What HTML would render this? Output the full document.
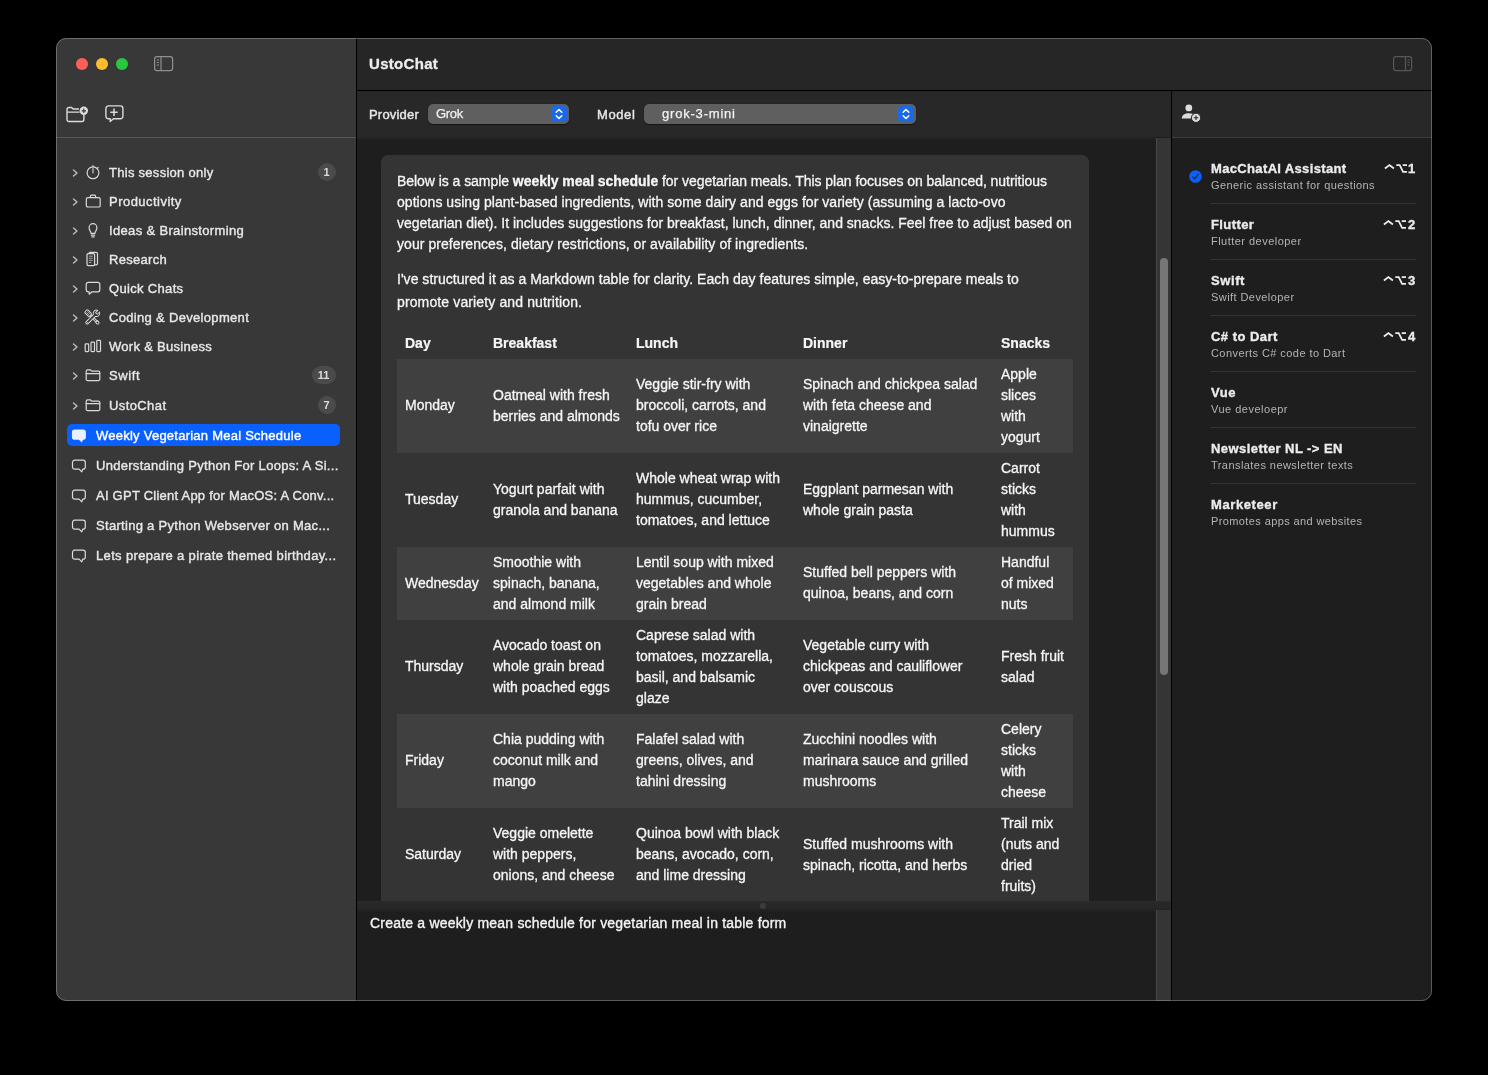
<!DOCTYPE html>
<html><head><meta charset="utf-8"><title>UstoChat</title>
<style>
html,body{margin:0;padding:0;background:#000;}
body{width:1488px;height:1075px;position:relative;overflow:hidden;font-family:"Liberation Sans",sans-serif;font-size:13px;color:#e4e4e4;}
div,span,b{font-family:"Liberation Sans",sans-serif;}
.abs{position:absolute;}
svg{position:absolute;overflow:visible;}
#win{position:absolute;left:56px;top:38px;width:1376px;height:963px;border-radius:10px;overflow:hidden;background:#1e1e1e;}
#winborder{position:absolute;left:56px;top:38px;width:1374px;height:961px;border-radius:10px;border:1px solid rgba(255,255,255,0.27);z-index:50;}
#sidebar{position:absolute;left:0;top:0;width:300px;height:963px;background:#383838;}
#sbline{position:absolute;left:0;top:99px;width:300px;height:1px;background:#585858;}
#vline1{position:absolute;left:300px;top:0;width:1px;height:963px;background:#000;}
#titlebar{position:absolute;left:301px;top:0;width:1075px;height:52px;background:#262626;}
#hline1{position:absolute;left:301px;top:52px;width:1075px;height:1px;background:#000;}
#provbar{position:absolute;left:301px;top:53px;width:814px;height:46px;background:#282828;}
#chat{position:absolute;left:301px;top:99px;width:799px;height:764px;background:#1e1e1e;overflow:hidden;}
#vline2{position:absolute;left:1115px;top:53px;width:1px;height:910px;background:#000;}
#rtool{position:absolute;left:1116px;top:53px;width:260px;height:46px;background:#282828;}
#rline{position:absolute;left:1116px;top:99px;width:260px;height:1px;background:#3c3c3c;}
#rpanel{position:absolute;left:1116px;top:100px;width:260px;height:863px;background:#1e1e1e;}
.tl{position:absolute;top:20px;width:12px;height:12px;border-radius:6px;}
.t{position:absolute;white-space:nowrap;will-change:transform;}
.sb{font-size:13px;color:#e8e8e8;line-height:16px;height:16px;-webkit-text-stroke:0.38px #e8e8e8;}
.badge{position:absolute;will-change:transform;height:18px;border-radius:9px;background:#4b4b4b;color:#dcdcdc;font-size:11px;font-weight:bold;line-height:18px;text-align:center;padding-right:1px;box-sizing:border-box;}
.msg{font-size:14px;line-height:21px;color:#f6f6f6;-webkit-text-stroke:0.3px #f6f6f6;}
.msg b{-webkit-text-stroke:0.3px #f6f6f6;}
.cell{position:absolute;will-change:transform;font-size:14px;line-height:21px;color:#f6f6f6;white-space:nowrap;-webkit-text-stroke:0.3px #f6f6f6;}
.rt{font-size:13px;font-weight:bold;color:#ececec;line-height:16px;height:16px;-webkit-text-stroke:0.35px #ececec;}
.rs{font-size:11px;color:#b4b4b4;line-height:14px;height:14px;}
.rdiv{position:absolute;left:95px;width:205px;height:1px;background:#343434;}
.track{position:absolute;left:1100px;width:14px;background:#353535;border-left:1px solid #474747;}
</style></head><body>
<div id="win">
<div id="sidebar">
<div class="tl" style="left:20px;background:#fe5f57;"></div>
<div class="tl" style="left:40px;background:#febc2e;"></div>
<div class="tl" style="left:60px;background:#28c840;"></div>
<div id="sbline"></div>
<svg style="left:98px;top:18px" width="20" height="16" viewBox="0 0 20 16"><rect x="0.6" y="0.6" width="18" height="14.1" rx="2.4" fill="none" stroke="#909090" stroke-width="1.2"/><path d="M7 0.6V14.7" stroke="#909090" stroke-width="1.2"/><path d="M2.8 4h2.2M2.8 6.5h2.2M2.8 9h2.2" stroke="#909090" stroke-width="1"/></svg>
<svg style="left:10px;top:66px" width="24" height="20" viewBox="0 0 24 20"><path d="M1 6.2 V15.6 a1.9 1.9 0 0 0 1.9 1.9 H16 a1.9 1.9 0 0 0 1.9 -1.9 V11" fill="none" stroke="#dcdcdc" stroke-width="1.4"/><path d="M1 6.4 V5.4 a1.9 1.9 0 0 1 1.9 -1.9 H5.6 l1.6 1.5 H13" fill="none" stroke="#dcdcdc" stroke-width="1.4"/><path d="M1 8.2 H13.6" stroke="#dcdcdc" stroke-width="1.3"/><circle cx="17.8" cy="6.8" r="4.2" fill="#dedede"/><path d="M17.8 4.6v4.4M15.6 6.8h4.4" stroke="#383838" stroke-width="1.15"/></svg>
<svg style="left:49px;top:66px" width="20" height="20" viewBox="0 0 20 20"><path d="M3.4 1.9 H15.4 a2.5 2.5 0 0 1 2.5 2.5 V12.2 a2.5 2.5 0 0 1 -2.5 2.5 H8.4 L5.2 17.6 V14.7 H3.4 a2.5 2.5 0 0 1 -2.5 -2.5 V4.4 a2.5 2.5 0 0 1 2.5 -2.5 Z" fill="none" stroke="#dcdcdc" stroke-width="1.4" stroke-linejoin="round"/><path d="M9 4.6v7.4M5.3 8.3h7.4" stroke="#dcdcdc" stroke-width="1.5"/></svg>
<svg style="left:16px;top:129.7px" width="7" height="10" viewBox="0 0 7 10"><path d="M1.5 1.9 L5 5 L1.5 8.1" fill="none" stroke="#bdbdbd" stroke-width="1.4" stroke-linecap="round" stroke-linejoin="round"/></svg>
<svg style="left:29.4px;top:125.6px" width="16" height="16" viewBox="0 0 16 16"><circle cx="8" cy="8.8" r="5.9" fill="none" stroke="#dadada" stroke-width="1.2" stroke-linecap="round" stroke-linejoin="round"/><path d="M8 4.6v4.4M8 1.5v1.3M12.2 4.4l0.9-0.9" fill="none" stroke="#dadada" stroke-width="1.1" stroke-linecap="round"/></svg>
<div class="t sb" style="left:53px;top:127px;letter-spacing:0.28px;">This session only</div>
<div class="badge" style="left:262px;top:125px;width:18px;">1</div>
<svg style="left:16px;top:158.7px" width="7" height="10" viewBox="0 0 7 10"><path d="M1.5 1.9 L5 5 L1.5 8.1" fill="none" stroke="#bdbdbd" stroke-width="1.4" stroke-linecap="round" stroke-linejoin="round"/></svg>
<svg style="left:29.4px;top:154.6px" width="16" height="16" viewBox="0 0 16 16"><rect x="1.3" y="4.6" width="13.9" height="9.4" rx="1.6" fill="none" stroke="#dadada" stroke-width="1.2" stroke-linecap="round" stroke-linejoin="round"/><path d="M5.4 4.4V3.2a1 1 0 0 1 1-1h3.2a1 1 0 0 1 1 1v1.2" fill="none" stroke="#dadada" stroke-width="1.2" stroke-linecap="round" stroke-linejoin="round"/></svg>
<div class="t sb" style="left:53px;top:156px;letter-spacing:0.47px;">Productivity</div>
<svg style="left:16px;top:187.7px" width="7" height="10" viewBox="0 0 7 10"><path d="M1.5 1.9 L5 5 L1.5 8.1" fill="none" stroke="#bdbdbd" stroke-width="1.4" stroke-linecap="round" stroke-linejoin="round"/></svg>
<svg style="left:29.4px;top:183.6px" width="16" height="16" viewBox="0 0 16 16"><path d="M6.1 11.4 C5.9 9.4 4.1 8.6 4.1 5.6 a3.9 3.9 0 0 1 7.8 0 C11.9 8.6 10.1 9.4 9.9 11.4 Z" fill="none" stroke="#dadada" stroke-width="1.2" stroke-linecap="round" stroke-linejoin="round"/><path d="M6.3 13.2h3.4M6.9 14.9h2.2" fill="none" stroke="#dadada" stroke-width="1.2" stroke-linecap="round" stroke-linejoin="round"/></svg>
<div class="t sb" style="left:53px;top:185px;letter-spacing:0.34px;">Ideas &amp; Brainstorming</div>
<svg style="left:16px;top:216.7px" width="7" height="10" viewBox="0 0 7 10"><path d="M1.5 1.9 L5 5 L1.5 8.1" fill="none" stroke="#bdbdbd" stroke-width="1.4" stroke-linecap="round" stroke-linejoin="round"/></svg>
<svg style="left:29.4px;top:212.6px" width="16" height="16" viewBox="0 0 16 16"><rect x="2" y="2.6" width="7.6" height="12" rx="1.3" fill="none" stroke="#dadada" stroke-width="1.2" stroke-linecap="round" stroke-linejoin="round"/><path d="M4.4 1.4H11.2a1.3 1.3 0 0 1 1.3 1.3V12.6a1.3 1.3 0 0 1-1.3 1.3H10.4" fill="none" stroke="#dadada" stroke-width="1.2" stroke-linecap="round" stroke-linejoin="round"/><path d="M3.9 5.2h3.8M3.9 7.3h3.8M3.9 9.4h3.8M3.9 11.5h2.4" fill="none" stroke="#dadada" stroke-width="0.8" opacity="0.85"/></svg>
<div class="t sb" style="left:53px;top:214px;letter-spacing:0.3px;">Research</div>
<svg style="left:16px;top:245.7px" width="7" height="10" viewBox="0 0 7 10"><path d="M1.5 1.9 L5 5 L1.5 8.1" fill="none" stroke="#bdbdbd" stroke-width="1.4" stroke-linecap="round" stroke-linejoin="round"/></svg>
<svg style="left:29.4px;top:241.6px" width="16" height="16" viewBox="0 0 16 16"><path d="M3.2 2.4H12.8a2 2 0 0 1 2 2V9.8a2 2 0 0 1-2 2H7L4.2 14.2V11.8H3.2a2 2 0 0 1-2-2V4.4a2 2 0 0 1 2-2Z" fill="none" stroke="#dadada" stroke-width="1.2" stroke-linecap="round" stroke-linejoin="round"/></svg>
<div class="t sb" style="left:53px;top:243px;letter-spacing:0.33px;">Quick Chats</div>
<svg style="left:16px;top:274.7px" width="7" height="10" viewBox="0 0 7 10"><path d="M1.5 1.9 L5 5 L1.5 8.1" fill="none" stroke="#bdbdbd" stroke-width="1.4" stroke-linecap="round" stroke-linejoin="round"/></svg>
<svg style="left:29.4px;top:270.6px" width="16" height="16" viewBox="0 0 16 16"><g transform="translate(7.4 8.4) scale(0.9)"><g transform="rotate(45)"><rect x="-10.3" y="-2.3" width="7.2" height="4.6" rx="1.3" fill="#383838" stroke="#dadada" stroke-width="1.05" stroke-linejoin="round"/><path d="M-8.7 -0.8h4.2M-8.7 0.8h4.2" stroke="#dadada" stroke-width="0.7"/><rect x="-3.1" y="-0.95" width="9.6" height="1.9" fill="#383838" stroke="#dadada" stroke-width="1.05" stroke-linejoin="round"/><path d="M6.5 -1.5h2.3l1.3 1.5l-1.3 1.5h-2.3z" fill="#383838" stroke="#dadada" stroke-width="1.05" stroke-linejoin="round"/></g><g transform="rotate(-45)"><path d="M3.18 -1.55A3.6 3.6 0 0 1 9.76 -1.3L6.3 -1.3L6.3 1.3L9.76 1.3A3.6 3.6 0 0 1 3.18 1.55L-8.2 1.55A1.55 1.55 0 0 1 -8.2 -1.55Z" fill="#383838" stroke="#dadada" stroke-width="1.05" stroke-linejoin="round"/><circle cx="-8" cy="0" r="0.55" fill="#dadada"/></g></g></svg>
<div class="t sb" style="left:53px;top:272px;letter-spacing:0.32px;">Coding &amp; Development</div>
<svg style="left:16px;top:303.7px" width="7" height="10" viewBox="0 0 7 10"><path d="M1.5 1.9 L5 5 L1.5 8.1" fill="none" stroke="#bdbdbd" stroke-width="1.4" stroke-linecap="round" stroke-linejoin="round"/></svg>
<svg style="left:28.4px;top:299.6px" width="18" height="16" viewBox="0 0 18 16"><rect x="1.2" y="5.9" width="3.5" height="7.7" rx="0.8" fill="none" stroke="#dadada" stroke-width="1.2" stroke-linecap="round" stroke-linejoin="round"/><rect x="7" y="4.2" width="3.5" height="9.4" rx="0.8" fill="none" stroke="#dadada" stroke-width="1.2" stroke-linecap="round" stroke-linejoin="round"/><rect x="12.8" y="2.3" width="3.7" height="11.3" rx="0.8" fill="none" stroke="#dadada" stroke-width="1.2" stroke-linecap="round" stroke-linejoin="round"/></svg>
<div class="t sb" style="left:53px;top:301px;letter-spacing:0.29px;">Work &amp; Business</div>
<svg style="left:16px;top:332.7px" width="7" height="10" viewBox="0 0 7 10"><path d="M1.5 1.9 L5 5 L1.5 8.1" fill="none" stroke="#bdbdbd" stroke-width="1.4" stroke-linecap="round" stroke-linejoin="round"/></svg>
<svg style="left:29.4px;top:328.6px" width="16" height="16" viewBox="0 0 16 16"><path d="M1.2 5.4V4.2a1.4 1.4 0 0 1 1.4-1.4H5.2l1.4 1.3H13.4a1.4 1.4 0 0 1 1.4 1.4V12.2a1.4 1.4 0 0 1-1.4 1.4H2.6a1.4 1.4 0 0 1-1.4-1.4Z" fill="none" stroke="#dadada" stroke-width="1.2" stroke-linecap="round" stroke-linejoin="round"/><path d="M1.2 6.6H14.8" fill="none" stroke="#dadada" stroke-width="1.2" stroke-linecap="round" stroke-linejoin="round"/></svg>
<div class="t sb" style="left:53px;top:330px;letter-spacing:0.6px;">Swift</div>
<div class="badge" style="left:256px;top:328px;width:24px;">11</div>
<svg style="left:16px;top:362.7px" width="7" height="10" viewBox="0 0 7 10"><path d="M1.5 1.9 L5 5 L1.5 8.1" fill="none" stroke="#bdbdbd" stroke-width="1.4" stroke-linecap="round" stroke-linejoin="round"/></svg>
<svg style="left:29.4px;top:358.6px" width="16" height="16" viewBox="0 0 16 16"><path d="M1.2 5.4V4.2a1.4 1.4 0 0 1 1.4-1.4H5.2l1.4 1.3H13.4a1.4 1.4 0 0 1 1.4 1.4V12.2a1.4 1.4 0 0 1-1.4 1.4H2.6a1.4 1.4 0 0 1-1.4-1.4Z" fill="none" stroke="#dadada" stroke-width="1.2" stroke-linecap="round" stroke-linejoin="round"/><path d="M1.2 6.6H14.8" fill="none" stroke="#dadada" stroke-width="1.2" stroke-linecap="round" stroke-linejoin="round"/></svg>
<div class="t sb" style="left:53px;top:360px;letter-spacing:0.4px;">UstoChat</div>
<div class="badge" style="left:262px;top:358px;width:18px;">7</div>
<div class="abs" style="left:11px;top:386px;width:273px;height:22px;border-radius:5px;background:#0a5fff;"></div>
<svg style="left:15.2px;top:389.5px" width="16" height="16" viewBox="0 0 16 16"><path d="M3.7 1.6H12.1a2.8 2.8 0 0 1 2.8 2.8V8.9a2.8 2.8 0 0 1-2.8 2.8H12L10.9 14.6L7.9 11.7H3.7a2.8 2.8 0 0 1-2.8-2.8V4.4a2.8 2.8 0 0 1 2.8-2.8Z" fill="#e9f0ff" stroke="none"/></svg>
<div class="t sb" style="left:40px;top:390px;letter-spacing:0.245px;color:#fff;-webkit-text-stroke-color:#fff;">Weekly Vegetarian Meal Schedule</div>
<svg style="left:15.2px;top:419.5px" width="16" height="16" viewBox="0 0 16 16"><path d="M3.7 2.2H12.1a2.2 2.2 0 0 1 2.2 2.2V8.9a2.2 2.2 0 0 1-2.2 2.2H11.7L10.8 13.9L8.1 11.1H3.7a2.2 2.2 0 0 1-2.2-2.2V4.4a2.2 2.2 0 0 1 2.2-2.2Z" fill="none" stroke="#dadada" stroke-width="1.2" stroke-linecap="round" stroke-linejoin="round"/></svg>
<div class="t sb" style="left:40px;top:420px;letter-spacing:0.29px;">Understanding Python For Loops: A Si...</div>
<svg style="left:15.2px;top:449.5px" width="16" height="16" viewBox="0 0 16 16"><path d="M3.7 2.2H12.1a2.2 2.2 0 0 1 2.2 2.2V8.9a2.2 2.2 0 0 1-2.2 2.2H11.7L10.8 13.9L8.1 11.1H3.7a2.2 2.2 0 0 1-2.2-2.2V4.4a2.2 2.2 0 0 1 2.2-2.2Z" fill="none" stroke="#dadada" stroke-width="1.2" stroke-linecap="round" stroke-linejoin="round"/></svg>
<div class="t sb" style="left:40px;top:450px;letter-spacing:0.24px;">AI GPT Client App for MacOS: A Conv...</div>
<svg style="left:15.2px;top:479.5px" width="16" height="16" viewBox="0 0 16 16"><path d="M3.7 2.2H12.1a2.2 2.2 0 0 1 2.2 2.2V8.9a2.2 2.2 0 0 1-2.2 2.2H11.7L10.8 13.9L8.1 11.1H3.7a2.2 2.2 0 0 1-2.2-2.2V4.4a2.2 2.2 0 0 1 2.2-2.2Z" fill="none" stroke="#dadada" stroke-width="1.2" stroke-linecap="round" stroke-linejoin="round"/></svg>
<div class="t sb" style="left:40px;top:480px;letter-spacing:0.3px;">Starting a Python Webserver on Mac...</div>
<svg style="left:15.2px;top:509.5px" width="16" height="16" viewBox="0 0 16 16"><path d="M3.7 2.2H12.1a2.2 2.2 0 0 1 2.2 2.2V8.9a2.2 2.2 0 0 1-2.2 2.2H11.7L10.8 13.9L8.1 11.1H3.7a2.2 2.2 0 0 1-2.2-2.2V4.4a2.2 2.2 0 0 1 2.2-2.2Z" fill="none" stroke="#dadada" stroke-width="1.2" stroke-linecap="round" stroke-linejoin="round"/></svg>
<div class="t sb" style="left:40px;top:510px;letter-spacing:0.345px;">Lets prepare a pirate themed birthday...</div>
</div>
<div id="vline1"></div>
<div id="titlebar">
<div class="t" style="left:12px;top:17px;line-height:18px;font-size:15px;font-weight:bold;color:#ededed;letter-spacing:0.3px;-webkit-text-stroke:0.3px #ededed;">UstoChat</div>
<svg style="left:1036px;top:18px" width="20" height="16" viewBox="0 0 20 16"><rect x="0.6" y="0.6" width="18" height="14.1" rx="2.4" fill="none" stroke="#575757" stroke-width="1.2"/><path d="M12.5 0.6V14.7" stroke="#575757" stroke-width="1.2"/><path d="M14.4 4h2.2M14.4 6.5h2.2M14.4 9h2.2" stroke="#575757" stroke-width="1"/></svg>
</div>
<div id="hline1"></div>
<div id="provbar">
<div class="t" style="left:12px;top:16px;font-size:13px;line-height:16px;color:#e8e8e8;letter-spacing:0.2px;-webkit-text-stroke:0.4px #e8e8e8;">Provider</div>
<div class="t" style="left:240px;top:16px;font-size:13px;line-height:16px;color:#e8e8e8;letter-spacing:0.6px;-webkit-text-stroke:0.4px #e8e8e8;">Model</div>
<div class="abs" style="left:71px;top:13px;width:141px;height:20px;border-radius:5px;background:#5f5f5f;box-shadow:0 0.5px 1px rgba(0,0,0,0.5);"></div><div class="abs" style="left:194px;top:15px;width:16px;height:16px;border-radius:4px;background:#1c69e6;"></div><svg style="left:194px;top:15px" width="16" height="16" viewBox="0 0 16 16"><path d="M5.2 6.3L8 3.5L10.8 6.3M5.2 9.7L8 12.5L10.8 9.7" fill="none" stroke="#fff" stroke-width="1.5" stroke-linecap="round" stroke-linejoin="round"/></svg><div class="t" style="left:79px;top:15px;font-size:13px;line-height:16px;color:#f2f2f2;letter-spacing:-0.3px;-webkit-text-stroke:0.25px #f2f2f2;">Grok</div>
<div class="abs" style="left:287px;top:13px;width:272px;height:20px;border-radius:5px;background:#5f5f5f;box-shadow:0 0.5px 1px rgba(0,0,0,0.5);"></div><div class="abs" style="left:541px;top:15px;width:16px;height:16px;border-radius:4px;background:#1c69e6;"></div><svg style="left:541px;top:15px" width="16" height="16" viewBox="0 0 16 16"><path d="M5.2 6.3L8 3.5L10.8 6.3M5.2 9.7L8 12.5L10.8 9.7" fill="none" stroke="#fff" stroke-width="1.5" stroke-linecap="round" stroke-linejoin="round"/></svg><div class="t" style="left:305px;top:15px;font-size:13px;line-height:16px;color:#f2f2f2;letter-spacing:0.8px;-webkit-text-stroke:0.25px #f2f2f2;">grok-3-mini</div>
</div>
<div id="chat">
<div class="abs" style="left:0;top:0;width:814px;height:3px;background:linear-gradient(#272727,#1e1e1e);"></div>
<div class="abs" style="left:24px;top:18px;width:708px;height:800px;border-radius:7px;background:#343434;"></div>
<div class="t msg" style="left:40px;top:33.5px;letter-spacing:-0.05px;">Below is a sample <b>weekly meal schedule</b> for vegetarian meals. This plan focuses on balanced, nutritious</div>
<div class="t msg" style="left:40px;top:54.5px;letter-spacing:0.04px;">options using plant-based ingredients, with some dairy and eggs for variety (assuming a lacto-ovo</div>
<div class="t msg" style="left:40px;top:75.5px;letter-spacing:0.0px;">vegetarian diet). It includes suggestions for breakfast, lunch, dinner, and snacks. Feel free to adjust based on</div>
<div class="t msg" style="left:40px;top:96.5px;letter-spacing:0.06px;">your preferences, dietary restrictions, or availability of ingredients.</div>
<div class="t msg" style="left:40px;top:131.5px;letter-spacing:0.023px;">I've structured it as a Markdown table for clarity. Each day features simple, easy-to-prepare meals to</div>
<div class="t msg" style="left:40px;top:154.5px;letter-spacing:0.127px;">promote variety and nutrition.</div>
<div class="cell" style="left:48px;top:196px;font-weight:bold;-webkit-text-stroke:0.2px #f6f6f6;">Day</div>
<div class="cell" style="left:136px;top:196px;font-weight:bold;-webkit-text-stroke:0.2px #f6f6f6;">Breakfast</div>
<div class="cell" style="left:279px;top:196px;font-weight:bold;-webkit-text-stroke:0.2px #f6f6f6;">Lunch</div>
<div class="cell" style="left:446px;top:196px;font-weight:bold;-webkit-text-stroke:0.2px #f6f6f6;">Dinner</div>
<div class="cell" style="left:644px;top:196px;font-weight:bold;-webkit-text-stroke:0.2px #f6f6f6;">Snacks</div>
<div class="abs" style="left:40px;top:222px;width:676px;height:94px;background:#414040;"></div>
<div class="cell" style="left:48px;top:258px;">Monday</div>
<div class="cell" style="left:136px;top:248px;">Oatmeal with fresh<br>berries and almonds</div>
<div class="cell" style="left:279px;top:237px;">Veggie stir-fry with<br>broccoli, carrots, and<br>tofu over rice</div>
<div class="cell" style="left:446px;top:237px;">Spinach and chickpea salad<br>with feta cheese and<br>vinaigrette</div>
<div class="cell" style="left:644px;top:227px;">Apple<br>slices<br>with<br>yogurt</div>
<div class="cell" style="left:48px;top:352px;">Tuesday</div>
<div class="cell" style="left:136px;top:342px;">Yogurt parfait with<br>granola and banana</div>
<div class="cell" style="left:279px;top:331px;">Whole wheat wrap with<br>hummus, cucumber,<br>tomatoes, and lettuce</div>
<div class="cell" style="left:446px;top:342px;">Eggplant parmesan with<br>whole grain pasta</div>
<div class="cell" style="left:644px;top:321px;">Carrot<br>sticks<br>with<br>hummus</div>
<div class="abs" style="left:40px;top:410px;width:676px;height:73px;background:#414040;"></div>
<div class="cell" style="left:48px;top:436px;">Wednesday</div>
<div class="cell" style="left:136px;top:415px;">Smoothie with<br>spinach, banana,<br>and almond milk</div>
<div class="cell" style="left:279px;top:415px;">Lentil soup with mixed<br>vegetables and whole<br>grain bread</div>
<div class="cell" style="left:446px;top:425px;">Stuffed bell peppers with<br>quinoa, beans, and corn</div>
<div class="cell" style="left:644px;top:415px;">Handful<br>of mixed<br>nuts</div>
<div class="cell" style="left:48px;top:519px;">Thursday</div>
<div class="cell" style="left:136px;top:498px;">Avocado toast on<br>whole grain bread<br>with poached eggs</div>
<div class="cell" style="left:279px;top:488px;">Caprese salad with<br>tomatoes, mozzarella,<br>basil, and balsamic<br>glaze</div>
<div class="cell" style="left:446px;top:498px;">Vegetable curry with<br>chickpeas and cauliflower<br>over couscous</div>
<div class="cell" style="left:644px;top:509px;">Fresh fruit<br>salad</div>
<div class="abs" style="left:40px;top:577px;width:676px;height:94px;background:#414040;"></div>
<div class="cell" style="left:48px;top:613px;">Friday</div>
<div class="cell" style="left:136px;top:592px;">Chia pudding with<br>coconut milk and<br>mango</div>
<div class="cell" style="left:279px;top:592px;">Falafel salad with<br>greens, olives, and<br>tahini dressing</div>
<div class="cell" style="left:446px;top:592px;">Zucchini noodles with<br>marinara sauce and grilled<br>mushrooms</div>
<div class="cell" style="left:644px;top:582px;">Celery<br>sticks<br>with<br>cheese</div>
<div class="cell" style="left:48px;top:707px;">Saturday</div>
<div class="cell" style="left:136px;top:686px;">Veggie omelette<br>with peppers,<br>onions, and cheese</div>
<div class="cell" style="left:279px;top:686px;">Quinoa bowl with black<br>beans, avocado, corn,<br>and lime dressing</div>
<div class="cell" style="left:446px;top:697px;">Stuffed mushrooms with<br>spinach, ricotta, and herbs</div>
<div class="cell" style="left:644px;top:676px;">Trail mix<br>(nuts and<br>dried<br>fruits)</div>
</div>
<div class="track" style="top:100px;height:763px;"></div>
<div class="abs" style="left:1104px;top:220px;width:8px;height:417px;border-radius:4px;background:#767676;"></div>
<div class="abs" style="left:301px;top:863px;width:814px;height:11px;background:linear-gradient(#2b2b2b 0px,#282828 2px,#272727 7px,#1f1f1f 11px);"></div>
<div class="abs" style="left:704px;top:865px;width:6px;height:6px;border-radius:3px;background:#3c3c3c;"></div>
<div class="track" style="top:872px;height:91px;"></div>
<div class="t" style="left:314px;top:874.5px;font-size:14px;line-height:21px;color:#f4f4f4;letter-spacing:0.2px;-webkit-text-stroke:0.35px #f4f4f4;">Create a weekly mean schedule for vegetarian meal in table form</div>
<div id="rtool">
<svg style="left:9px;top:12px" width="20" height="20" viewBox="0 0 20 20"><circle cx="7.8" cy="4.9" r="3.4" fill="#dcdcdc"/><path d="M0.8 15.6c0-3.6 3.2-5.4 7-5.4 1.6 0 3 .3 4.2 .9a5 5 0 0 0-1.6 4.5Z" fill="#dcdcdc"/><circle cx="15" cy="14.8" r="4.6" fill="#dcdcdc" stroke="#282828" stroke-width="1"/><path d="M15 12.5v4.6M12.7 14.8h4.6" stroke="#282828" stroke-width="1.1"/></svg>
</div>
<div id="rline"></div>
<div id="rpanel">
<div class="t rt" style="left:39px;top:23px;letter-spacing:0.35px;">MacChatAI Assistant</div>
<div class="t rs" style="left:39px;top:40px;letter-spacing:0.42px;">Generic assistant for questions</div>
<div class="rdiv" style="left:39px;top:65px;"></div>
<svg style="left:212.4px;top:24px" width="26" height="12" viewBox="0 0 26 12"><path d="M0.9 6.4L5.4 3.1L9.9 6.4" fill="none" stroke="#ececec" stroke-width="1.9" stroke-linejoin="miter"/><path d="M12.3 3.2H15.7L19.1 9.8H23M18.7 3.2H23" fill="none" stroke="#ececec" stroke-width="1.8"/></svg>
<div class="t rt" style="left:236px;top:23px;">1</div>
<div class="t rt" style="left:39px;top:79px;letter-spacing:0.4px;">Flutter</div>
<div class="t rs" style="left:39px;top:96px;letter-spacing:0.47px;">Flutter developer</div>
<div class="rdiv" style="left:39px;top:121px;"></div>
<svg style="left:211.2px;top:80px" width="26" height="12" viewBox="0 0 26 12"><path d="M0.9 6.4L5.4 3.1L9.9 6.4" fill="none" stroke="#ececec" stroke-width="1.9" stroke-linejoin="miter"/><path d="M12.3 3.2H15.7L19.1 9.8H23M18.7 3.2H23" fill="none" stroke="#ececec" stroke-width="1.8"/></svg>
<div class="t rt" style="left:236px;top:79px;">2</div>
<div class="t rt" style="left:39px;top:135px;letter-spacing:0.58px;">Swift</div>
<div class="t rs" style="left:39px;top:152px;letter-spacing:0.43px;">Swift Developer</div>
<div class="rdiv" style="left:39px;top:177px;"></div>
<svg style="left:211.2px;top:136px" width="26" height="12" viewBox="0 0 26 12"><path d="M0.9 6.4L5.4 3.1L9.9 6.4" fill="none" stroke="#ececec" stroke-width="1.9" stroke-linejoin="miter"/><path d="M12.3 3.2H15.7L19.1 9.8H23M18.7 3.2H23" fill="none" stroke="#ececec" stroke-width="1.8"/></svg>
<div class="t rt" style="left:236px;top:135px;">3</div>
<div class="t rt" style="left:39px;top:191px;letter-spacing:0.48px;">C# to Dart</div>
<div class="t rs" style="left:39px;top:208px;letter-spacing:0.43px;">Converts C# code to Dart</div>
<div class="rdiv" style="left:39px;top:233px;"></div>
<svg style="left:211.2px;top:192px" width="26" height="12" viewBox="0 0 26 12"><path d="M0.9 6.4L5.4 3.1L9.9 6.4" fill="none" stroke="#ececec" stroke-width="1.9" stroke-linejoin="miter"/><path d="M12.3 3.2H15.7L19.1 9.8H23M18.7 3.2H23" fill="none" stroke="#ececec" stroke-width="1.8"/></svg>
<div class="t rt" style="left:236px;top:191px;">4</div>
<div class="t rt" style="left:39px;top:247px;letter-spacing:0.6px;">Vue</div>
<div class="t rs" style="left:39px;top:264px;letter-spacing:0.5px;">Vue develoepr</div>
<div class="rdiv" style="left:39px;top:289px;"></div>
<div class="t rt" style="left:39px;top:303px;letter-spacing:0.43px;">Newsletter NL -&gt; EN</div>
<div class="t rs" style="left:39px;top:320px;letter-spacing:0.44px;">Translates newsletter texts</div>
<div class="rdiv" style="left:39px;top:345px;"></div>
<div class="t rt" style="left:39px;top:359px;letter-spacing:0.6px;">Marketeer</div>
<div class="t rs" style="left:39px;top:376px;letter-spacing:0.39px;">Promotes apps and websites</div>
<svg style="left:17px;top:32px" width="13" height="13" viewBox="0 0 13 13"><circle cx="6.5" cy="6.5" r="6.3" fill="#0a60ff"/><path d="M3.7 6.9L5.7 9L9.3 4.2" fill="none" stroke="#1b2b55" stroke-width="1.3" stroke-linecap="round" stroke-linejoin="round"/></svg>
</div>
<div id="vline2"></div>
</div>
<div id="winborder"></div>
</body></html>
